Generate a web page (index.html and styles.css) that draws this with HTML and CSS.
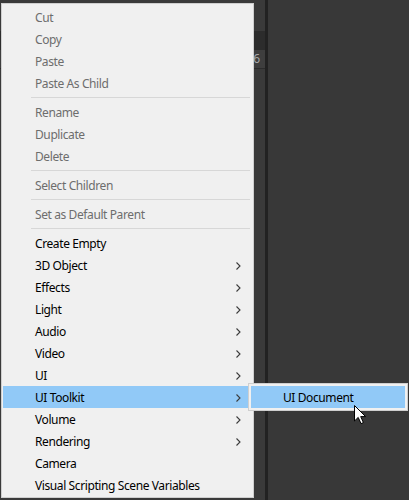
FILE: index.html
```html
<!DOCTYPE html>
<html>
<head>
<meta charset="utf-8">
<link rel="stylesheet" href="styles.css">
</head>
<body>
<div class="editor">
  <div class="hierarchy">
    <div class="hier-top"></div>
    <div class="hier-header"></div>
    <div class="hier-row">16</div>
    <div class="hier-rest"></div>
  </div>
  <div class="divider"></div>
  <div class="scene"></div>
</div>

<div class="menu">
  <div class="item disabled">Cut</div>
  <div class="item disabled">Copy</div>
  <div class="item disabled">Paste</div>
  <div class="item disabled">Paste As Child</div>
  <div class="sep"></div>
  <div class="item disabled">Rename</div>
  <div class="item disabled">Duplicate</div>
  <div class="item disabled">Delete</div>
  <div class="sep"></div>
  <div class="item disabled">Select Children</div>
  <div class="sep"></div>
  <div class="item disabled">Set as Default Parent</div>
  <div class="sep"></div>
  <div class="item">Create Empty</div>
  <div class="item sub">3D Object<svg class="chev" width="5" height="8" viewBox="0 0 5 8"><path d="M0.5 0.5 L4 4 L0.5 7.5" fill="none" stroke="#3a3a3a" stroke-width="1.1"/></svg></div>
  <div class="item sub">Effects<svg class="chev" width="5" height="8" viewBox="0 0 5 8"><path d="M0.5 0.5 L4 4 L0.5 7.5" fill="none" stroke="#3a3a3a" stroke-width="1.1"/></svg></div>
  <div class="item sub">Light<svg class="chev" width="5" height="8" viewBox="0 0 5 8"><path d="M0.5 0.5 L4 4 L0.5 7.5" fill="none" stroke="#3a3a3a" stroke-width="1.1"/></svg></div>
  <div class="item sub">Audio<svg class="chev" width="5" height="8" viewBox="0 0 5 8"><path d="M0.5 0.5 L4 4 L0.5 7.5" fill="none" stroke="#3a3a3a" stroke-width="1.1"/></svg></div>
  <div class="item sub">Video<svg class="chev" width="5" height="8" viewBox="0 0 5 8"><path d="M0.5 0.5 L4 4 L0.5 7.5" fill="none" stroke="#3a3a3a" stroke-width="1.1"/></svg></div>
  <div class="item sub">UI<svg class="chev" width="5" height="8" viewBox="0 0 5 8"><path d="M0.5 0.5 L4 4 L0.5 7.5" fill="none" stroke="#3a3a3a" stroke-width="1.1"/></svg></div>
  <div class="item sub active">UI Toolkit<svg class="chev" width="5" height="8" viewBox="0 0 5 8"><path d="M0.5 0.5 L4 4 L0.5 7.5" fill="none" stroke="#3a3a3a" stroke-width="1.1"/></svg></div>
  <div class="item sub">Volume<svg class="chev" width="5" height="8" viewBox="0 0 5 8"><path d="M0.5 0.5 L4 4 L0.5 7.5" fill="none" stroke="#3a3a3a" stroke-width="1.1"/></svg></div>
  <div class="item sub">Rendering<svg class="chev" width="5" height="8" viewBox="0 0 5 8"><path d="M0.5 0.5 L4 4 L0.5 7.5" fill="none" stroke="#3a3a3a" stroke-width="1.1"/></svg></div>
  <div class="item">Camera</div>
  <div class="item">Visual Scripting Scene Variables</div>
</div>

<div class="submenu">
  <div class="item active">UI Document</div>
</div>

<svg class="cursor" width="13" height="20" viewBox="0 0 13 20">
  <path d="M0.5 0.5 L0.5 16 L4.2 12.4 L7 18.6 L9.4 17.6 L6.7 11.6 L11.6 11.6 Z" fill="#ffffff" stroke="#000000" stroke-width="1" stroke-linejoin="miter"/>
</svg>
</body>
</html>
```

FILE: styles.css
```css
html, body {
  margin: 0;
  padding: 0;
}

body {
  width: 409px;
  height: 500px;
  overflow: hidden;
  background: #383838;
  font-family: "Segoe UI", "Noto Sans", "Open Sans", sans-serif;
  font-size: 12px;
  position: relative;
}

.editor {
  display: flex;
  height: 500px;
}

.hierarchy {
  width: 265px;
  display: flex;
  flex-direction: column;
  background: #3c3c3c;
}

.hier-top {
  height: 31px;
  background: #3a3a3a;
}

.hier-header {
  height: 19px;
  background: #2c2c2c;
}

.hier-row {
  height: 18px;
  line-height: 18px;
  text-align: right;
  padding-right: 5px;
  color: #a8a8a8;
  background: #3e3e3e;
  border-bottom: 1px solid #2c2c2c;
}

.hier-rest {
  flex: 1;
  background: #3a3a3a;
}

.divider {
  width: 3px;
  background: #222222;
}

.scene {
  flex: 1;
  background: #383838;
}

.menu {
  position: absolute;
  left: 1px;
  top: 3px;
  width: 253px;
  box-sizing: border-box;
  padding: 2px 1px 1px 1px;
  background: #f0f0f0;
  border: 1px solid #cfcfcf;
}

.item {
  height: 22px;
  line-height: 22px;
  padding-left: 32px;
  padding-top: 1px;
  box-sizing: border-box;
  color: #000000;
  letter-spacing: -0.4px;
  display: flex;
  align-items: center;
  white-space: nowrap;
}

.item.disabled {
  color: #6d6d6d;
}

.item.active {
  background: #91c9f7;
}

.chev {
  margin-left: auto;
  margin-right: 11px;
}

.sep {
  height: 1px;
  margin: 3px 2px 3px 28px;
  background: #d7d7d7;
}

.submenu {
  position: absolute;
  left: 248px;
  top: 383px;
  width: 160px;
  box-sizing: border-box;
  padding: 2px;
  background: #f0f0f0;
  border: 1px solid #cfcfcf;
}

.cursor {
  position: absolute;
  left: 354px;
  top: 405px;
}
```
